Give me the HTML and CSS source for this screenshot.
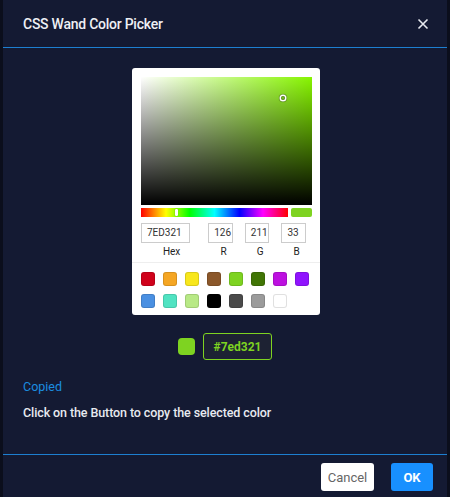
FILE: index.html
```html
<!DOCTYPE html>
<html>

<head>
    <link rel="stylesheet" href="styles.css">
    <title>CSS Wand Color Picker</title>
</head>

<body>
    <div class="modal">
        <div class="modal-header">
            <h2 class="modal-title">CSS Wand Color Picker</h2>
            <span class="close">
                <svg width="12" height="12" viewBox="0 0 12 12">
                    <path d="M1.5 1.5 L10.5 10.5 M10.5 1.5 L1.5 10.5" stroke="#e6e8ee" stroke-width="1.6" fill="none" />
                </svg>
            </span>
        </div>

        <div class="modal-body">
            <div class="picker-row">
                <div class="sketch">
                    <div class="saturation">
                        <div class="sat-white"></div>
                        <div class="sat-black"></div>
                        <div class="pointer"></div>
                    </div>

                    <div class="controls">
                        <div class="hue">
                            <div class="hue-thumb"></div>
                        </div>
                        <div class="preview"></div>
                    </div>

                    <div class="fields">
                        <div class="field double">
                            <div class="input">7ED321</div>
                            <div class="label">Hex</div>
                        </div>
                        <div class="field">
                            <div class="input">126</div>
                            <div class="label">R</div>
                        </div>
                        <div class="field">
                            <div class="input">211</div>
                            <div class="label">G</div>
                        </div>
                        <div class="field">
                            <div class="input">33</div>
                            <div class="label">B</div>
                        </div>
                    </div>

                    <div class="presets">
                        <div class="swatch" style="background:#D0021B"></div>
                        <div class="swatch" style="background:#F5A623"></div>
                        <div class="swatch" style="background:#F8E71C"></div>
                        <div class="swatch" style="background:#8B572A"></div>
                        <div class="swatch" style="background:#7ED321"></div>
                        <div class="swatch" style="background:#417505"></div>
                        <div class="swatch" style="background:#BD10E0"></div>
                        <div class="swatch" style="background:#9013FE"></div>
                        <div class="swatch" style="background:#4A90E2"></div>
                        <div class="swatch" style="background:#50E3C2"></div>
                        <div class="swatch" style="background:#B8E986"></div>
                        <div class="swatch" style="background:#000000"></div>
                        <div class="swatch" style="background:#4A4A4A"></div>
                        <div class="swatch" style="background:#9B9B9B"></div>
                        <div class="swatch" style="background:#FFFFFF"></div>
                    </div>
                </div>
            </div>

            <div class="copy-row">
                <div class="chip"></div>
                <button class="copy-btn">#7ed321</button>
            </div>

            <p class="copied">Copied</p>
            <p class="hint">Click on the Button to copy the selected color</p>
        </div>

        <div class="modal-footer">
            <button class="btn btn-cancel">Cancel</button>
            <button class="btn btn-ok">OK</button>
        </div>
    </div>
</body>

</html>
```

FILE: styles.css
```css
html,
body {
    margin: 0;
    height: 100%;
}

body {
    background: #0b0e1c;
    font-family: Roboto, "Open Sans", sans-serif;
    padding: 0 3px;
}

.modal {
    background: #141a33;
    height: 100%;
    display: flex;
    flex-direction: column;
}

.modal-header {
    height: 47px;
    border-bottom: 1px solid #1d7fd1;
    display: flex;
    align-items: center;
    justify-content: space-between;
    padding: 0 20px;
}

.modal-title {
    margin: 0;
    color: #eef0f5;
    font-size: 14px;
    font-weight: 500;
    letter-spacing: -0.25px;
}

.close {
    display: flex;
    margin-right: -2px;
}

.modal-body {
    flex: 1;
    padding: 20px 20px 0;
}

.picker-row {
    display: flex;
    justify-content: center;
}

.sketch {
    width: 188px;
    box-sizing: border-box;
    background: #fff;
    border-radius: 3px;
    padding: 9px 8px 0 9px;
    margin-left: 2px;
}

.saturation {
    position: relative;
    height: 128px;
    background: #87f500;
}

.sat-white {
    position: absolute;
    inset: 0;
    background: linear-gradient(to right, #fff, rgba(255, 255, 255, 0));
}

.sat-black {
    position: absolute;
    inset: 0;
    background: linear-gradient(to top, #000, rgba(0, 0, 0, 0));
}

.pointer {
    position: absolute;
    left: 140px;
    top: 19px;
    width: 4px;
    height: 4px;
    border-radius: 50%;
    box-shadow: 0 0 0 1.5px #fff, inset 0 0 1px 1px rgba(0, 0, 0, .3), 0 0 1px 2px rgba(0, 0, 0, .4);
}

.controls {
    display: flex;
    gap: 3px;
    margin-top: 3px;
    height: 9px;
}

.hue {
    position: relative;
    flex: 1;
    background: linear-gradient(to right, #f00 0%, #ff0 17%, #0f0 33%, #0ff 50%, #00f 67%, #f0f 83%, #f00 100%);
}

.hue-thumb {
    position: absolute;
    left: 34px;
    top: 1px;
    width: 3px;
    height: 7px;
    background: #fff;
    border-radius: 1px;
    box-shadow: 0 0 1px rgba(0, 0, 0, .6);
}

.preview {
    width: 21px;
    background: #7ed321;
    border-radius: 2px;
}

.fields {
    display: flex;
    padding-top: 6px;
}

.field {
    flex: 1;
    padding-left: 6px;
    text-align: center;
}

.field.double {
    flex: 2;
    padding-left: 0;
}

.input {
    width: 80%;
    height: 20px;
    box-sizing: border-box;
    box-shadow: inset 0 0 0 1px #ccc;
    font-size: 10px;
    line-height: 20px;
    color: #333;
    text-align: left;
    padding-left: 6px;
}

.label {
    font-size: 10px;
    color: #222;
    padding: 3px 0 4px;
    line-height: 12px;
}

.presets {
    display: flex;
    flex-wrap: wrap;
    gap: 8px;
    border-top: 1px solid #eee;
    margin: 0 -8px 0 -9px;
    padding: 9px 9px 7px;
}

.swatch {
    width: 14px;
    height: 14px;
    border-radius: 3px;
    box-shadow: inset 0 0 0 1px rgba(0, 0, 0, .12);
}

.copy-row {
    display: flex;
    justify-content: center;
    align-items: center;
    gap: 8px;
    margin-top: 18px;
}

.chip {
    width: 17px;
    height: 17px;
    border-radius: 4px;
    background: #7ed321;
}

.copy-btn {
    width: 69px;
    height: 27px;
    padding: 0;
    background: #1d2233;
    border: 1px solid #7ed321;
    border-radius: 3px;
    color: #7ed321;
    font-family: inherit;
    font-weight: 700;
    font-size: 12px;
}

.copied {
    margin: 19px 0 0;
    color: #1b8de0;
    font-size: 12.5px;
}

.hint {
    margin: 11px 0 0;
    color: #e8eaf0;
    font-size: 12.5px;
    font-weight: 500;
    letter-spacing: -0.1px;
}

.modal-footer {
    border-top: 1px solid #1d7fd1;
    display: flex;
    justify-content: flex-end;
    gap: 17px;
    padding: 8px 14px 6px;
}

.btn {
    height: 28px;
    border-radius: 3px;
    border: none;
    font-family: inherit;
    font-size: 13px;
    padding: 0;
}

.btn-cancel {
    background: #fff;
    color: #666;
    width: 53px;
}

.btn-ok {
    background: #1890ff;
    color: #fff;
    font-weight: 700;
    width: 42px;
}
```
